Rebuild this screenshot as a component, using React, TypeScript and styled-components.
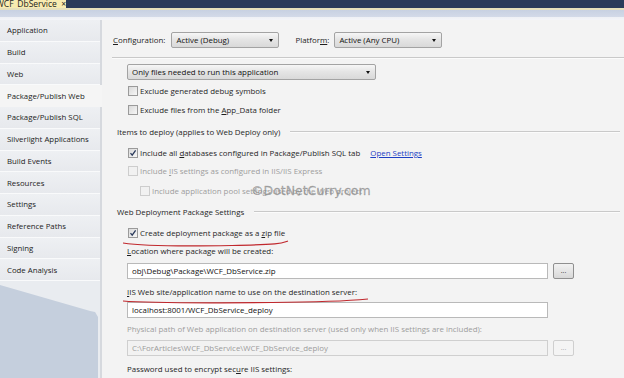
import React from 'react'
import styled, { createGlobalStyle } from 'styled-components'

const GlobalStyle = createGlobalStyle`
  html, body {
    margin: 0;
    padding: 0;
    background: #f3f3f3;
  }
  body {
    font-family: "Open Sans", "Noto Sans", sans-serif;
    font-size: 7.9px;
    color: #1f1f1f;
  }
`

const Page = styled("div")`
  width: 624px;
  height: 378px;
  overflow: hidden;
  display: flex;
  flex-direction: column;
`

const TopBar = styled("div")`
  height: 8px;
  background: #2b3b5a;
  display: flex;
`

const DocTab = styled("div")`
  width: 66px;
  height: 8px;
  overflow: hidden;
  background: #f8ebb0;
  display: flex;
  align-items: flex-end;
  box-sizing: border-box;
`

const DocTabText = styled("span")`
  line-height: 10px;
  margin-bottom: -1px;
  margin-left: -4px;
  white-space: nowrap;
  color: #222;
  font-size: 8.5px;
`

const Strip = styled("div")`
  height: 12px;
  background: linear-gradient(#e6e0bc 0, #e6e0bc 2px, #c8d1e2 2px, #d3dae8 9px, #eef0f5 9px, #f4f5f8 12px);
`

const Main = styled("div")`
  flex: 1;
  display: flex;
  min-height: 0;
`

const Sidebar = styled("div")`
  width: 100px;
  display: flex;
  flex-direction: column;
  background: #eceef2;
  border-right: 2px solid #d6d9de;
`

const NavItem = styled("div")<{ $active?: boolean }>`
  height: 21.75px;
  box-sizing: border-box;
  padding-left: 7px;
  display: flex;
  align-items: center;
  white-space: nowrap;
  font-size: 7.8px;
  color: #222;
  background: ${p => (p.$active ? '#f5f5f5' : 'linear-gradient(#eef0f3, #e7e9ed)')};
  border-bottom: 1px solid ${p => (p.$active ? '#f5f5f5' : '#f9fafb')};
  margin-right: ${p => (p.$active ? '-2px' : '0')};
  position: relative;
`

const SideFiller = styled("div")`
  flex: 1;
  background: #e9ecf0;
  display: flex;
  padding-right: 2px;
`

const SideShape = styled("div")`
  flex: 1;
  background: #c5cfdd;
  clip-path: polygon(0 4px, 92% 30px, 97% 31px, 100% 36px, 100% 100%, 0 100%);
`

const Content = styled("div")`
  flex: 1;
  position: relative;
  display: flex;
  flex-direction: column;
  background: #f3f3f3;
`

const ConfigRow = styled("div")`
  margin-top: 12px;
  height: 16px;
  padding-left: 11px;
  display: flex;
  align-items: center;
`

const FieldLabel = styled("span")<{ $gap: number; $ml?: number }>`
  margin-right: ${p => p.$gap}px;
  margin-left: ${p => p.$ml ?? 0}px;
  white-space: nowrap;
`

const U = styled("span")`
  text-decoration: underline;
  text-underline-offset: 1px;
`

const Label = styled("span")`
  white-space: pre;
`

const Select = styled("div")<{ $w: number }>`
  width: ${p => p.$w}px;
  height: 16px;
  box-sizing: border-box;
  border: 1px solid #a3a3a3;
  border-radius: 2px;
  background: linear-gradient(#f6f6f6, #e4e4e4 50%, #d9d9d9);
  display: flex;
  align-items: center;
  padding-left: 4px;
  white-space: nowrap;
  color: #111;
`

const SelectText = styled("span")`
  flex: 1;
`

const Arrow = styled("span")`
  width: 0;
  height: 0;
  border-left: 2.5px solid transparent;
  border-right: 2.5px solid transparent;
  border-top: 3px solid #111;
  margin-right: 5px;
`

const Separator = styled("div")`
  margin: 9px 0 0 10px;
  height: 1px;
  background: #c9c9c9;
  border-bottom: 1px solid #fbfbfb;
`

const Line = styled("div")<{ $h: number; $mt?: number; $indent?: number; $muted?: boolean }>`
  height: ${p => p.$h}px;
  margin-top: ${p => p.$mt ?? 0}px;
  padding-left: ${p => p.$indent ?? 25}px;
  display: flex;
  align-items: center;
  white-space: nowrap;
  position: relative;
  color: ${p => (p.$muted ? '#9d9d9d' : '#1f1f1f')};
`

const Heading = styled("span")`
  margin-right: 10px;
`

const HeadingRule = styled("span")`
  flex: 1;
  height: 1px;
  background: #c9c9c9;
  border-bottom: 1px solid #fbfbfb;
  margin-right: 4px;
`

const Box = styled("span")<{ $disabled?: boolean }>`
  width: 10px;
  height: 10px;
  box-sizing: border-box;
  margin-left: 1px;
  margin-right: 2px;
  border: 1px solid ${p => (p.$disabled ? '#cdcdcd' : '#9a9a9a')};
  background: ${p => (p.$disabled ? '#f1f1f1' : 'linear-gradient(135deg, #d9d9d9, #f7f7f7)')};
  display: inline-flex;
  align-items: center;
  justify-content: center;
  flex-shrink: 0;
`

const Link = styled("span")`
  margin-left: 10px;
  color: #1d3fc4;
  text-decoration: underline;
`

const InputRow = styled("div")<{ $mt: number }>`
  margin-top: ${p => p.$mt}px;
  height: 16px;
  padding-left: 25px;
  display: flex;
  align-items: center;
  gap: 5px;
`

const Input = styled("div")<{ $disabled?: boolean }>`
  width: 421px;
  height: 16px;
  box-sizing: border-box;
  border: 1px solid ${p => (p.$disabled ? '#cfcfcf' : '#b9b9b9')};
  background: ${p => (p.$disabled ? '#f2f2f2' : '#ffffff')};
  color: ${p => (p.$disabled ? '#9c9c9c' : '#111')};
  display: flex;
  align-items: center;
  padding-left: 4px;
  white-space: nowrap;
  overflow: hidden;
`

const Browse = styled("div")<{ $disabled?: boolean }>`
  width: 21px;
  height: 16px;
  box-sizing: border-box;
  border: 1px solid ${p => (p.$disabled ? '#cfcfcf' : '#8f8f8f')};
  border-radius: 2px;
  background: ${p => (p.$disabled ? '#f4f4f4' : 'linear-gradient(#f2f2f2, #d8d8d8)')};
  color: ${p => (p.$disabled ? '#aaa' : '#333')};
  display: flex;
  align-items: center;
  justify-content: center;
  font-size: 7px;
  line-height: 1;
  padding-bottom: 2px;
`

const Scribble = styled("svg")<{ $b: number }>`
  position: absolute;
  left: 20px;
  bottom: ${p => p.$b}px;
  pointer-events: none;
`

const Watermark = styled("div")`
  position: absolute;
  left: 149px;
  top: 163px;
  font-family: "DejaVu Sans", sans-serif;
  font-size: 12.5px;
  color: rgba(150, 150, 150, 0.75);
  -webkit-text-stroke: 0.3px rgba(120, 120, 120, 0.6);
  white-space: nowrap;
`

const Check = () => (
  <svg width="8" height="8" viewBox="0 0 8 8">
    <path d="M1.5 4.2 L3.2 6.2 L6.6 1.4" fill="none" stroke="#2a3a5c" strokeWidth="1.3" />
  </svg>
)

const navItems = [
  'Application',
  'Build',
  'Web',
  'Package/Publish Web',
  'Package/Publish SQL',
  'Silverlight Applications',
  'Build Events',
  'Resources',
  'Settings',
  'Reference Paths',
  'Signing',
  'Code Analysis',
]

export default function App() {
  return (
    <Page>
      <GlobalStyle />
      <TopBar>
        <DocTab>
          <DocTabText>WCF_DbService&nbsp;&nbsp;×</DocTabText>
        </DocTab>
      </TopBar>
      <Strip />
      <Main>
        <Sidebar>
          {navItems.map(name => (
            <NavItem key={name} $active={name === 'Package/Publish Web'}>
              {name}
            </NavItem>
          ))}
          <SideFiller>
            <SideShape />
          </SideFiller>
        </Sidebar>

        <Content>
          <ConfigRow>
            <FieldLabel $gap={6}>
              <U>C</U>onfiguration:
            </FieldLabel>
            <Select $w={108}>
              <SelectText>Active (Debug)</SelectText>
              <Arrow />
            </Select>
            <FieldLabel $gap={5} $ml={16}>
              Platfor<U>m</U>:
            </FieldLabel>
            <Select $w={108}>
              <SelectText>Active (Any CPU)</SelectText>
              <Arrow />
            </Select>
          </ConfigRow>

          <Separator />

          <Line $h={16} $mt={5}>
            <Select $w={249}>
              <SelectText>Only files needed to run this application</SelectText>
              <Arrow />
            </Select>
          </Line>

          <Line $h={18} $mt={2}>
            <Box />
            <Label>Exclude <U>g</U>enerated debug symbols</Label>
          </Line>
          <Line $h={20}>
            <Box />
            <Label>Exclude files from the <U>A</U>pp_Data folder</Label>
          </Line>

          <Line $h={24} $indent={15}>
            <Heading>Items to deploy (applies to Web Deploy only)</Heading>
            <HeadingRule />
          </Line>
          <Line $h={18}>
            <Box>
              <Check />
            </Box>
            <Label>Include all <U>d</U>atabases configured in Package/Publish SQL tab</Label>
            <Link>Open Settings</Link>
          </Line>
          <Line $h={18} $muted>
            <Box $disabled />
            <Label>Include <U>I</U>IS settings as configured in IIS/IIS Express</Label>
          </Line>
          <Line $h={22} $indent={37} $muted>
            <Box $disabled />
            <Label>Include application pool settings used by the Web project</Label>
          </Line>

          <Line $h={20} $indent={15}>
            <Heading>Web Deployment Package Settings</Heading>
            <HeadingRule />
          </Line>
          <Line $h={22}>
            <Box>
              <Check />
            </Box>
            <Label>Create deployment package as a <U>z</U>ip file</Label>
            <Scribble $b={-4} width="170" height="8" viewBox="0 0 170 8">
              <path d="M1 3 C 20 6, 60 6.5, 110 5.5 S 160 3, 166 1" fill="none" stroke="#c0282d" strokeWidth="1.2" />
            </Scribble>
          </Line>
          <Line $h={14}>
            <Label><U>L</U>ocation where package will be created:</Label>
          </Line>

          <InputRow $mt={5}>
            <Input>obj\Debug\Package\WCF_DbService.zip</Input>
            <Browse>...</Browse>
          </InputRow>

          <Line $h={16} $mt={5}>
            <Label><U>I</U>IS Web site/application name to use on the destination server:</Label>
            <Scribble $b={-5} width="250" height="8" viewBox="0 0 250 8">
              <path d="M1 4 C 30 6.5, 90 6, 150 5.5 S 225 4, 246 2" fill="none" stroke="#c0282d" strokeWidth="1.2" />
            </Scribble>
          </Line>

          <InputRow $mt={2}>
            <Input>localhost:8001/WCF_DbService_deploy</Input>
          </InputRow>

          <Line $h={18} $mt={2} $muted>
            <Label>Physical path of Web application on destination server (used only when IIS settings are included):</Label>
          </Line>

          <InputRow $mt={2}>
            <Input $disabled>C:\ForArticles\WCF_DbService\WCF_DbService_deploy</Input>
            <Browse $disabled>...</Browse>
          </InputRow>

          <Line $h={18} $mt={4}>
            <Label>Password used to encrypt sec<U>u</U>re IIS settings:</Label>
          </Line>

          <Watermark>©DotNetCurry.com</Watermark>
        </Content>
      </Main>
    </Page>
  )
}
